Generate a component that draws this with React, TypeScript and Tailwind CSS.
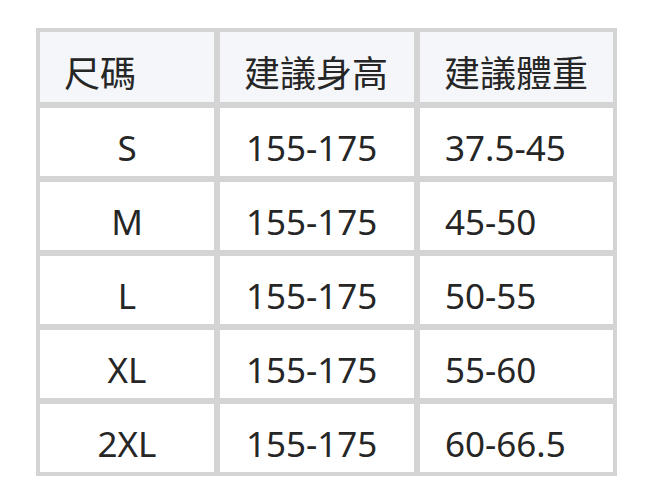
import React from "react";

const rows = [
  ["S", "155-175", "37.5-45"],
  ["M", "155-175", "45-50"],
  ["L", "155-175", "50-55"],
  ["XL", "155-175", "55-60"],
  ["2XL", "155-175", "60-66.5"],
];

export default function App() {
  const font = {
    fontFamily: '"Noto Sans", "Noto Sans CJK TC", sans-serif',
  };
  return (
    <div className="w-[652px] h-[503px] bg-white pt-[28px] pl-[36px]" style={font}>
      <div className="grid w-[581px] grid-cols-[174px_194px_193px] grid-rows-[70px_68px_68px_68px_68px_68px] gap-[6px] bg-[#d4d4d4] p-[4px] text-[35px] leading-none text-[#262626]">
        <div className="flex items-center bg-[#f5f6fa] pl-[24px] pt-[14px] text-[36px]">尺碼</div>
        <div className="flex items-center bg-[#f5f6fa] pl-[24px] pt-[14px] text-[36px]">建議身高</div>
        <div className="flex items-center bg-[#f5f6fa] pl-[24px] pt-[14px] text-[36px]">建議體重</div>
        {rows.map((r) => (
          <React.Fragment key={r[0]}>
            <div className="flex items-center justify-center bg-white pt-[10px]">{r[0]}</div>
            <div className="flex items-center bg-white pl-[26px] pt-[10px]">{r[1]}</div>
            <div className="flex items-center bg-white pl-[25px] pt-[10px]">{r[2]}</div>
          </React.Fragment>
        ))}
      </div>
    </div>
  );
}
